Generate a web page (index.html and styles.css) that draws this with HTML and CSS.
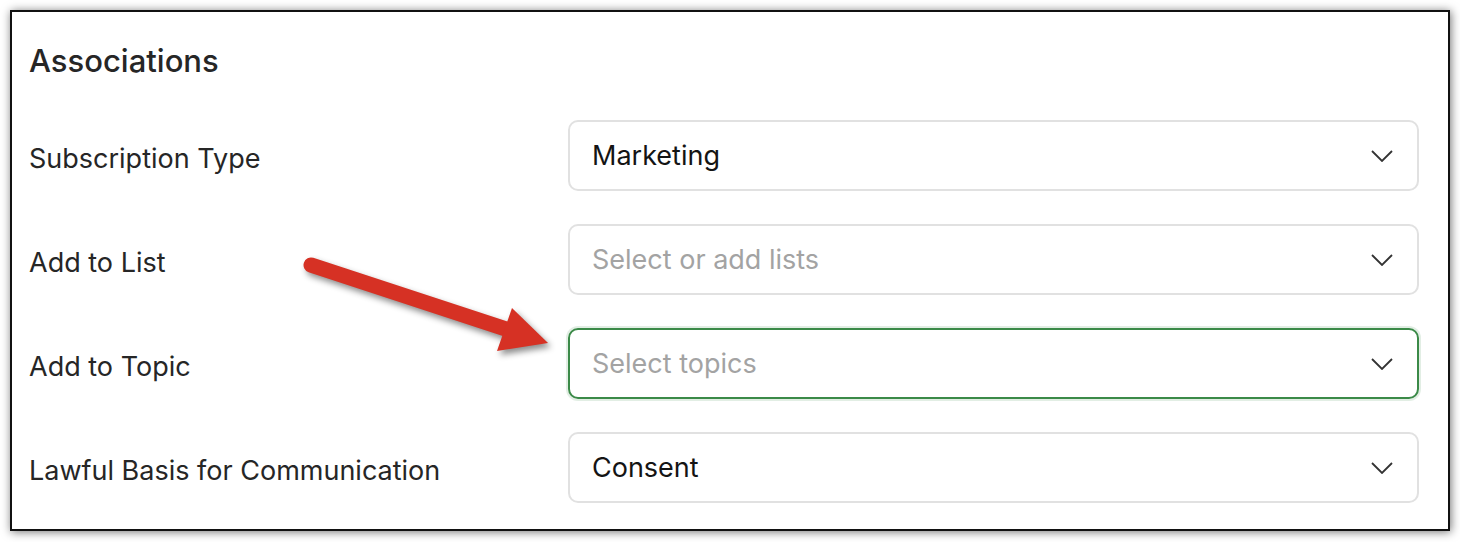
FILE: index.html
```html
<!DOCTYPE html>
<html lang="en">
<head>
<meta charset="utf-8">
<title>Associations</title>
<link rel="stylesheet" href="styles.css">
</head>
<body>
<section class="panel">
  <h2 class="panel-title">Associations</h2>
  <div class="rows">
    <div class="row">
      <span class="label">Subscription Type</span>
      <div class="select">
        <span class="value">Marketing</span>
        <svg class="chev" width="22" height="12" viewBox="0 0 22 12"><path d="M1 1 L11 11 L21 1" /></svg>
      </div>
    </div>
    <div class="row">
      <span class="label">Add to List</span>
      <div class="select">
        <span class="value placeholder">Select or add lists</span>
        <svg class="chev" width="22" height="12" viewBox="0 0 22 12"><path d="M1 1 L11 11 L21 1" /></svg>
      </div>
    </div>
    <div class="row">
      <span class="label">Add to Topic</span>
      <div class="select focused">
        <span class="value placeholder">Select topics</span>
        <svg class="chev" width="22" height="12" viewBox="0 0 22 12"><path d="M1 1 L11 11 L21 1" /></svg>
      </div>
    </div>
    <div class="row">
      <span class="label">Lawful Basis for Communication</span>
      <div class="select">
        <span class="value">Consent</span>
        <svg class="chev" width="22" height="12" viewBox="0 0 22 12"><path d="M1 1 L11 11 L21 1" /></svg>
      </div>
    </div>
  </div>
</section>
<svg class="annot" width="1460" height="542" viewBox="0 0 1460 542">
  <line x1="311" y1="265" x2="512" y2="331" stroke="#d63124" stroke-width="15" stroke-linecap="round"/>
  <polygon points="512,308 548,343 497,351" fill="#d63124"/>
</svg>
</body>
</html>
```
FILE: styles.css
```css
html, body {
  margin: 0;
  padding: 0;
  background: #ffffff;
}
body {
  font-family: Inter, "Noto Sans", "Liberation Sans", sans-serif;
  color: #262626;
  position: relative;
  width: 1460px;
  height: 542px;
  overflow: hidden;
}
.panel {
  box-sizing: border-box;
  margin: 10px 0 0 10px;
  width: 1440px;
  height: 521px;
  border: 2px solid #111;
  box-shadow: 1px 1px 9px rgba(0, 0, 0, 0.55);
  background: #fff;
  padding: 0 29px 0 17px;
}
.panel-title {
  margin: 0;
  padding-top: 30px;
  font-size: 31px;
  line-height: 38px;
  font-weight: 500;
  color: #262626;
}
.rows {
  margin-top: 40px;
  display: flex;
  flex-direction: column;
  gap: 33px;
}
.row {
  display: flex;
  align-items: center;
  justify-content: space-between;
}
.label {
  font-size: 27px;
  color: #262626;
  padding-top: 6px;
}
.select {
  box-sizing: border-box;
  width: 851px;
  height: 71px;
  border: 2px solid #e1e1e1;
  border-radius: 10px;
  display: flex;
  align-items: center;
  justify-content: space-between;
  padding: 0 24px 0 22px;
}
.select.focused {
  border-color: #3b8a48;
  box-shadow: 0 0 0 2px rgba(59, 138, 72, 0.15);
}
.value {
  font-size: 27px;
  color: #141414;
}
.value.placeholder {
  color: #a3a3a3;
}
.chev path {
  fill: none;
  stroke: #333;
  stroke-width: 1.8;
}
.annot {
  position: absolute;
  left: 0;
  top: 0;
  pointer-events: none;
  filter: drop-shadow(3px 4px 3px rgba(0, 0, 0, 0.45));
}
```
